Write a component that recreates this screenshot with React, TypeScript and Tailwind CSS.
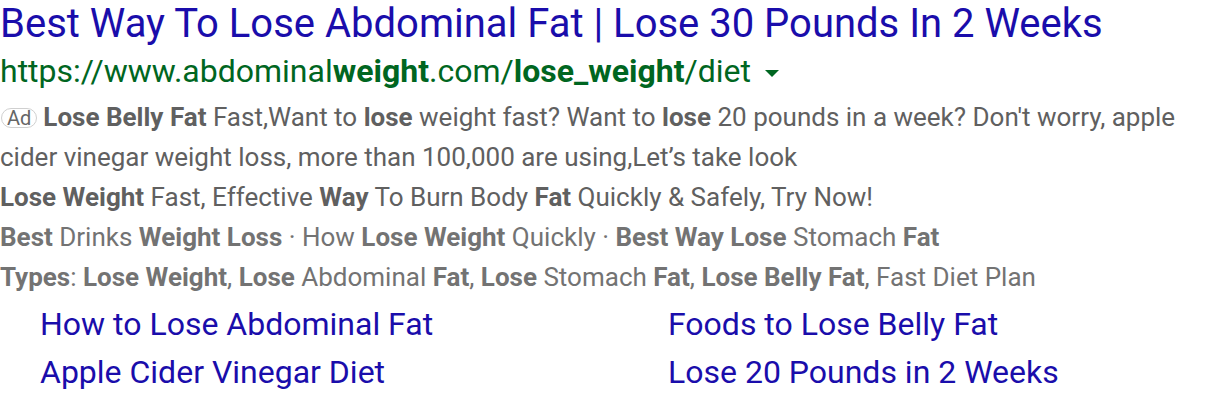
import React from "react";

const B = ({ children }: { children: React.ReactNode }) => (
  <b className="font-bold">{children}</b>
);

export default function App() {
  return (
    <div
      className="w-[1216px] h-[402px] bg-white overflow-hidden"
      style={{ fontFamily: "Roboto, 'Liberation Sans', sans-serif" }}
    >
      <div className="text-[40px] leading-[47px] text-[#1a0dab] whitespace-nowrap">
        Best Way To Lose Abdominal Fat | Lose 30 Pounds In 2 Weeks
      </div>
      <div className="flex items-center text-[32px] leading-[48px] text-[#006621] whitespace-nowrap">
        <span>
          https://www.abdominal<B>weight</B>.com/<B>lose_weight</B>/diet
        </span>
        <svg width="14" height="7" viewBox="0 0 14 7" className="ml-[14px] mt-[4px]">
          <path d="M0 0 L14 0 L7 7 Z" fill="#006621" />
        </svg>
      </div>
      <div className="mt-[2px] text-[26px] leading-[40px] whitespace-nowrap">
        <div className="text-[#606060] flex items-center">
          <span className="inline-flex items-center justify-center h-[20px] px-[5px] mr-[6px] ml-[1px] mt-[2px] border border-[#d0d0d0] rounded-[10px] text-[20px] leading-none text-[#666]">
            Ad
          </span>
          <span>
            <B>Lose Belly Fat</B> Fast,Want to <B>lose</B> weight fast? Want to <B>lose</B> 20 pounds in a week? Don't worry, apple
          </span>
        </div>
        <div className="text-[#606060]">
          cider vinegar weight loss, more than 100,000 are using,Let’s take look
        </div>
        <div className="text-[#606060]">
          <B>Lose Weight</B> Fast, Effective <B>Way</B> To Burn Body <B>Fat</B> Quickly &amp; Safely, Try Now!
        </div>
        <div className="text-[#737373]">
          <B>Best</B> Drinks <B>Weight Loss</B> · How <B>Lose Weight</B> Quickly · <B>Best Way Lose</B> Stomach <B>Fat</B>
        </div>
        <div className="text-[#737373]">
          <B>Types</B>: <B>Lose Weight</B>, <B>Lose</B> Abdominal <B>Fat</B>, <B>Lose</B> Stomach <B>Fat</B>, <B>Lose Belly Fat</B>, Fast Diet Plan
        </div>
      </div>
      <div className="mt-[3px] grid grid-cols-[628px_1fr] pl-[40px] text-[32px] leading-[48px] text-[#1a0dab] whitespace-nowrap">
        <div>How to Lose Abdominal Fat</div>
        <div>Foods to Lose Belly Fat</div>
        <div>Apple Cider Vinegar Diet</div>
        <div>Lose 20 Pounds in 2 Weeks</div>
      </div>
    </div>
  );
}
